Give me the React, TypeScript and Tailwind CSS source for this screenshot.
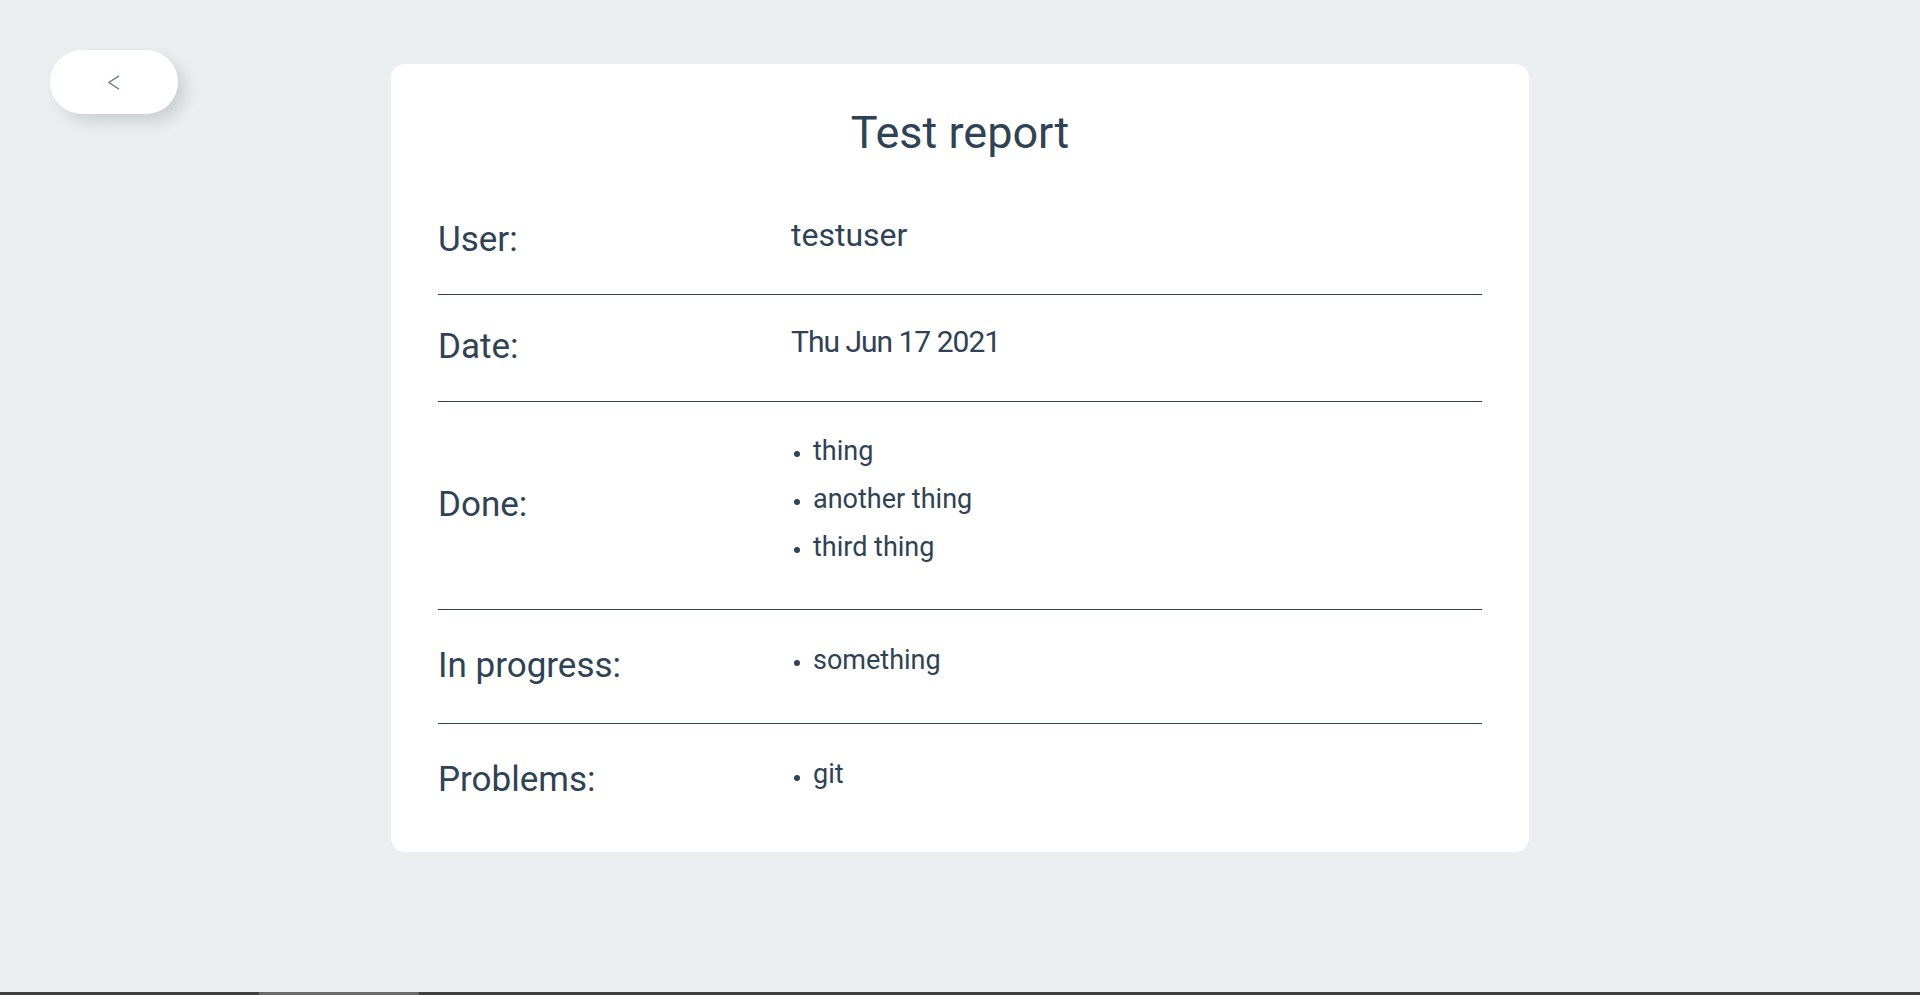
import React from 'react'

type Row = {
  label: string
  value?: string
  valueClass?: string
  items?: string[]
  height: string
  last?: boolean
}

const rows: Row[] = [
  { label: 'User:', value: 'testuser', valueClass: 'text-[32px]', height: 'h-[107px]' },
  {
    label: 'Date:',
    value: 'Thu Jun 17 2021',
    valueClass: 'text-[30px] tracking-[-1px]',
    height: 'h-[107px]',
  },
  { label: 'Done:', items: ['thing', 'another thing', 'third thing'], height: 'h-[208px]' },
  { label: 'In progress:', items: ['something'], height: 'h-[114px]' },
  { label: 'Problems:', items: ['git'], height: 'h-[114px]', last: true },
]

const BackButton: React.FC = () => (
  <button className="w-[128px] h-[64px] rounded-full bg-white flex items-center justify-center shadow-[8px_8px_16px_rgba(0,0,0,0.13)]">
    <svg width="12" height="15" viewBox="0 0 12 15" fill="none">
      <polyline points="11,0.8 1,7.5 11,14.2" stroke="#71828a" strokeWidth="1.4" />
    </svg>
  </button>
)

const ReportRow: React.FC<{ row: Row }> = ({ row }) => (
  <div
    className={`grid grid-cols-[353px_1fr] items-center ${row.height} ${
      row.last ? '' : 'border-b border-[#2f4256]'
    }`}
  >
    <div className="text-[35px] leading-[40px] pb-[2px]">{row.label}</div>
    {row.value && <div className={`${row.valueClass} leading-[30px] pb-[12px]`}>{row.value}</div>}
    {row.items && (
      <ul className="pb-[14px]">
        {row.items.map((item) => (
          <li key={item} className="flex items-center text-[27px] leading-[48px]">
            <span className="w-[6px] h-[6px] rounded-full bg-[#2f4256] ml-[3px] mr-[13px] mt-[7px]" />
            {item}
          </li>
        ))}
      </ul>
    )}
  </div>
)

export default function App() {
  return (
    <div className="h-screen flex flex-col bg-[#ebeff0] text-[#2f4256] font-['Roboto',sans-serif]">
      <div className="flex-1 grid grid-cols-[1fr_1138px_1fr]">
        <div className="pt-[50px] pl-[50px]">
          <BackButton />
        </div>

        <div className="pt-[64px]">
          <div className="bg-white rounded-[14px] pt-[43px] pb-[14px] px-[47px]">
            <h1 className="text-center text-[45px] leading-[52px] mb-[29px]">Test report</h1>
            {rows.map((row) => (
              <ReportRow key={row.label} row={row} />
            ))}
          </div>
        </div>

        <div />
      </div>

      {/* bottom scrollbar strip */}
      <div className="h-[3px] bg-[#3d3f41] flex">
        <div className="ml-[259px] w-[160px] bg-[#6a6a6a]" />
      </div>
    </div>
  )
}
